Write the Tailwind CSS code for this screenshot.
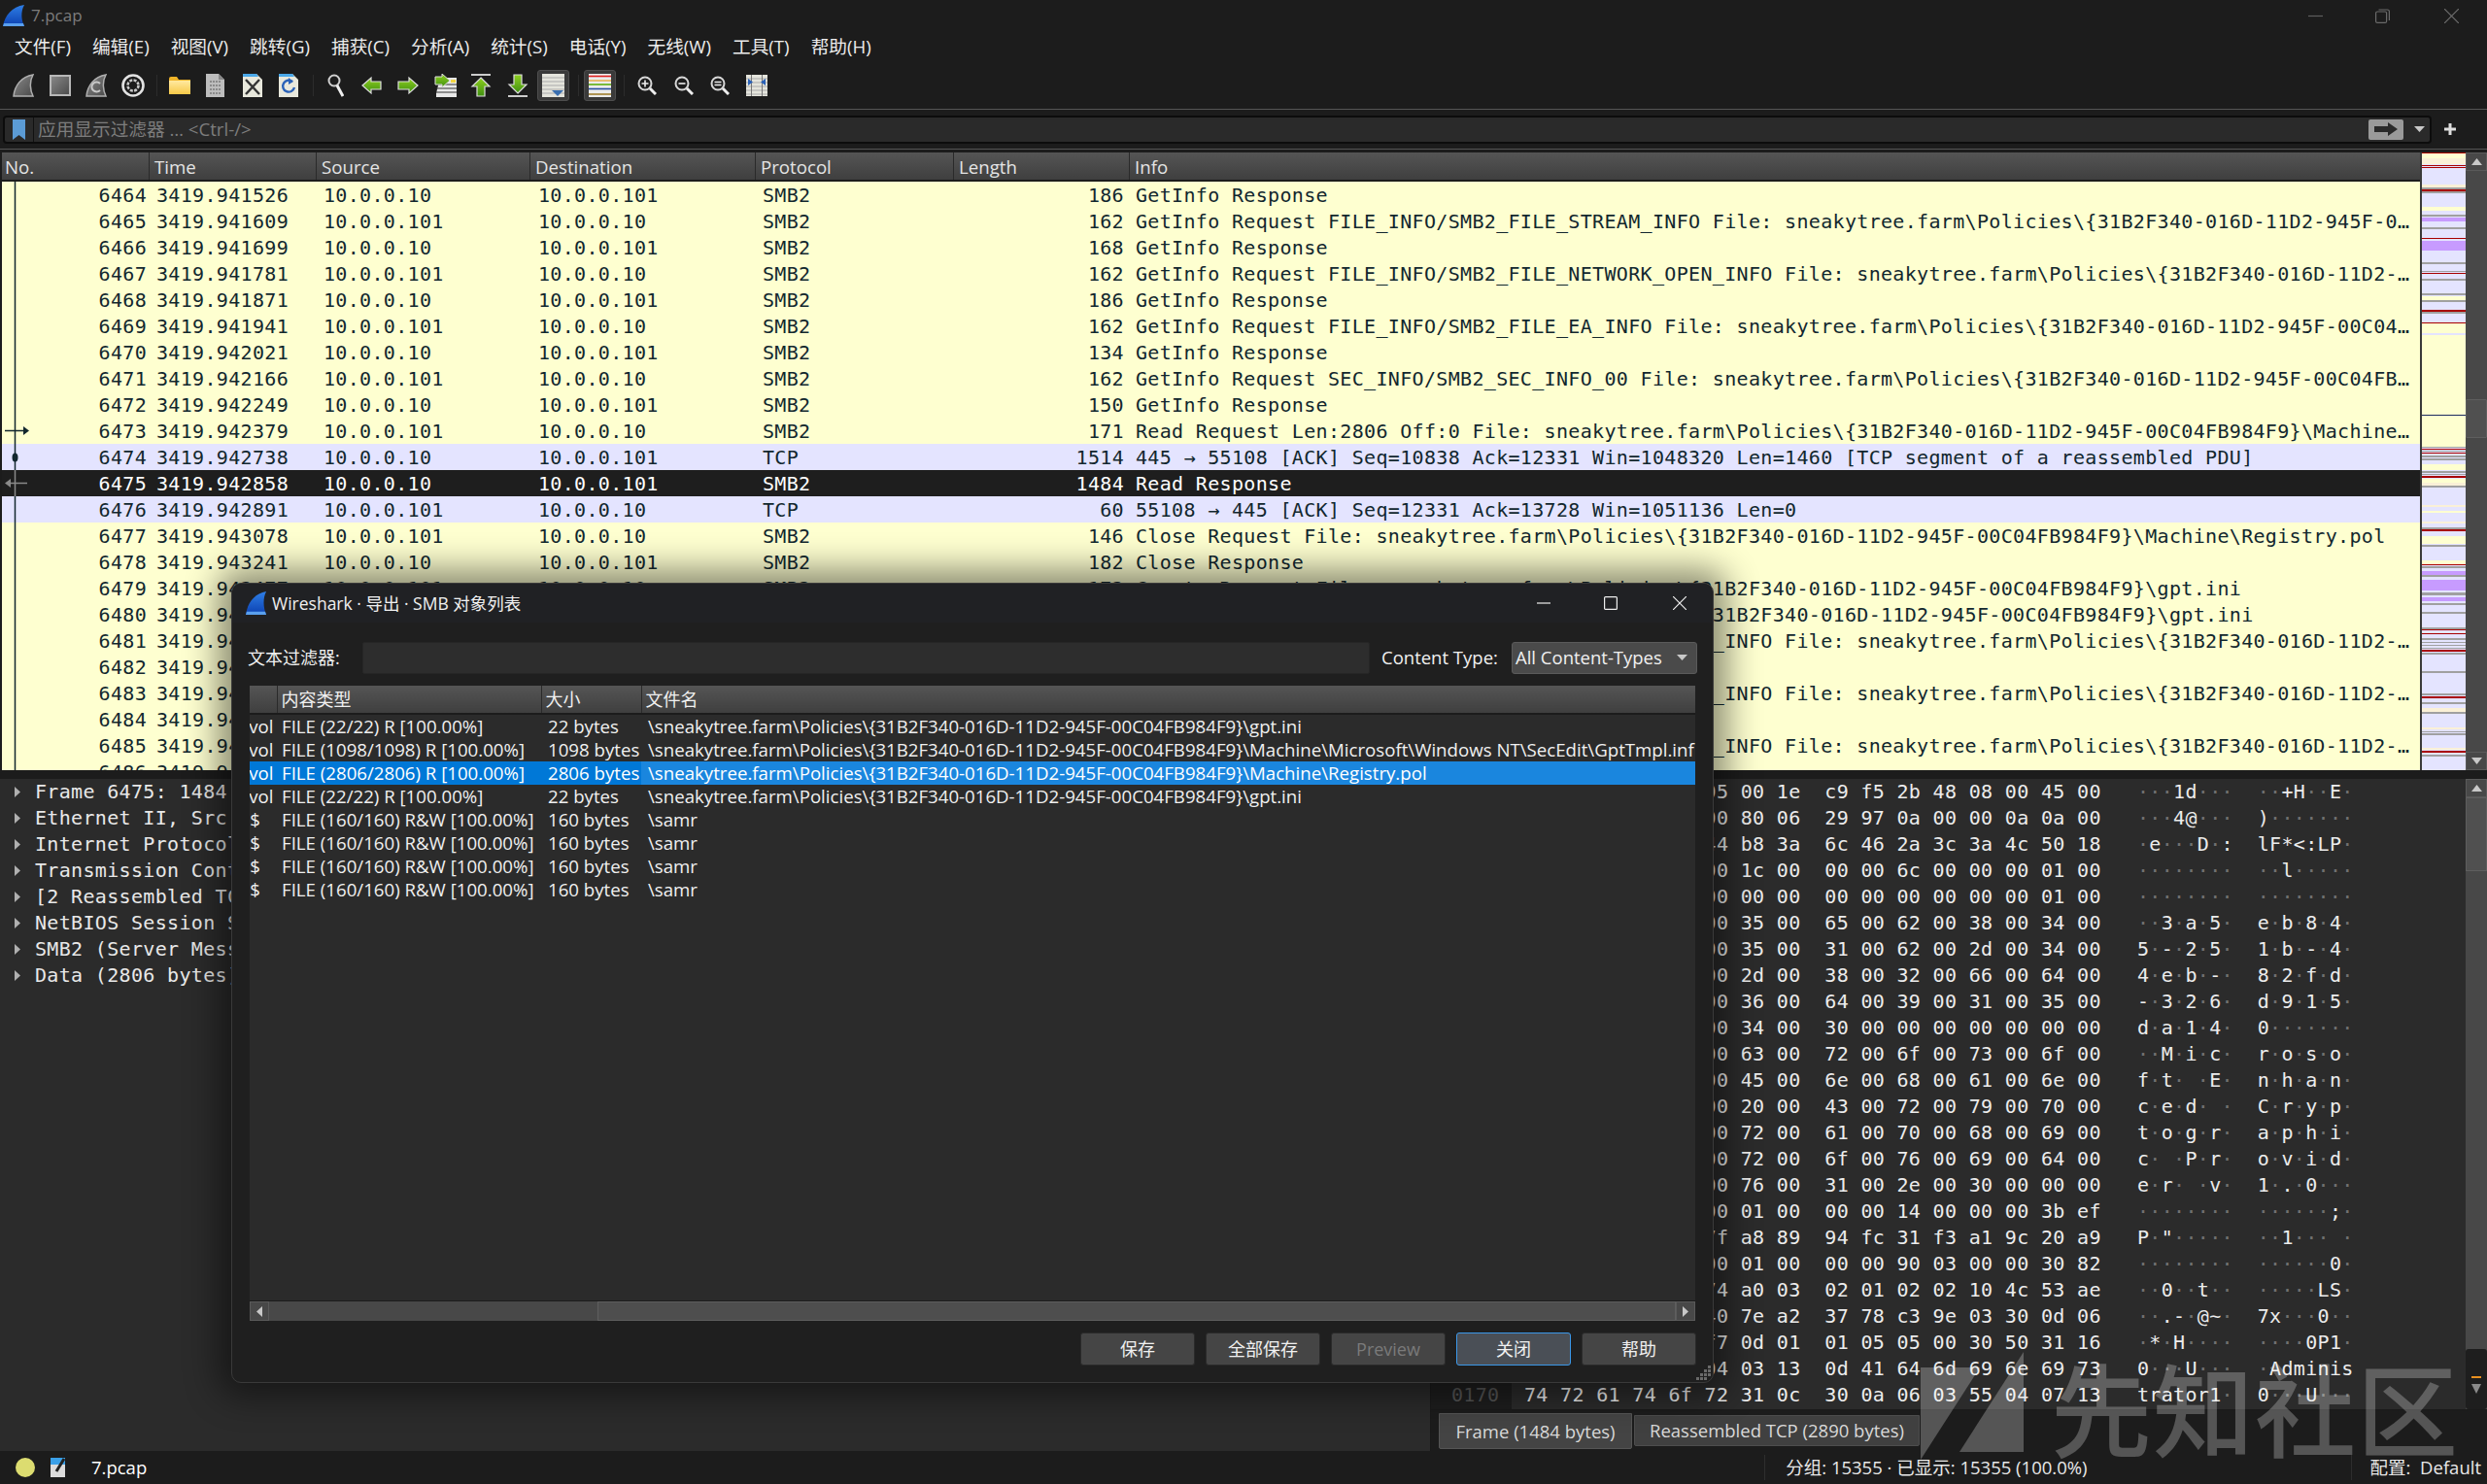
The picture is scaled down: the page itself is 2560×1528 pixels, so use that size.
<!DOCTYPE html>
<html lang="zh">
<head>
<meta charset="utf-8">
<title>7.pcap</title>
<script src="https://cdn.jsdelivr.net/npm/@tailwindcss/browser@4"></script>
</head>
<body class="bg-[#1c1c1c]">
<svg width="0" height="0" class="absolute">
  <defs>
    <linearGradient id="blue" x1="0" y1="0" x2="0" y2="1"><stop offset="0" stop-color="#2f7fe6"/><stop offset="1" stop-color="#0b3fb0"/></linearGradient>
    <linearGradient id="gray" x1="0" y1="0" x2="1" y2="1"><stop offset="0" stop-color="#8a8a8a"/><stop offset="1" stop-color="#4a4a4a"/></linearGradient>
    <linearGradient id="green" x1="0" y1="0" x2="0" y2="1"><stop offset="0" stop-color="#8fd020"/><stop offset="1" stop-color="#3f8f10"/></linearGradient>
    <linearGradient id="folder" x1="0" y1="0" x2="0" y2="1"><stop offset="0" stop-color="#ffe9a0"/><stop offset="1" stop-color="#f7c948"/></linearGradient>
  </defs>
</svg>
<div class="relative w-[2560px] h-[1528px] overflow-hidden flex flex-col bg-[#1c1c1c] text-[#e6e6e6] text-[18px] [font-family:'Open_Sans','Noto_Sans_CJK_SC',sans-serif]">

  <!-- title bar -->
  <div class="h-[32px] flex items-center relative">
    <svg class="ml-[2px] w-[24px] h-[24px]" viewBox="0 0 24 24"><path d="M1 23 C3 12 10 3 23 1 C19 8 20 17 23 23 Z" fill="url(#blue)"/><path d="M1 23 L23 23 L22 20 L2 20 Z" fill="#5aa0ee"/></svg>
    <span class="ml-[6px] text-[#7c7c7c] text-[17px]">7.pcap</span>
    <div class="ml-auto flex items-center">
      <svg class="w-[15px] h-[15px]" viewBox="0 0 15 15"><path d="M0 7.5H15" stroke="#5e5e5e" stroke-width="1.2"/></svg>
      <svg class="ml-[54px] w-[15px] h-[15px]" viewBox="0 0 15 15" fill="none" stroke="#6a6a6a" stroke-width="1.2"><rect x="0.6" y="3" width="11" height="11.4" rx="1.5"/><path d="M3.5 1H12.5Q14.4 1 14.4 3V12"/></svg>
      <svg class="ml-[56px] mr-[29px] w-[15px] h-[15px]" viewBox="0 0 15 15"><path d="M0 0L15 15M15 0L0 15" stroke="#6e6e6e" stroke-width="1.2"/></svg>
    </div>
  </div>

  <!-- menu -->
  <div class="h-[32px] flex items-center pl-[15px] gap-[22px] text-[18.67px] text-[#ececec]">
    <span>文件(F)</span><span>编辑(E)</span><span>视图(V)</span><span>跳转(G)</span><span>捕获(C)</span><span>分析(A)</span><span>统计(S)</span><span>电话(Y)</span><span>无线(W)</span><span>工具(T)</span><span>帮助(H)</span>
  </div>

  <!-- toolbar -->
  <div class="h-[48px] flex items-center pl-[13px] border-b border-b-[#555] box-content">
    <svg class="w-[22px] h-[24px]" viewBox="0 0 22 24"><path d="M1 23 C2 12 9 3 21 1 C17 8 18 17 21 23 Z" fill="url(#gray)" stroke="#b0b0b0" stroke-width="1.5"/></svg>
    <svg class="ml-[16px] w-[22px] h-[22px]" viewBox="0 0 22 22"><rect x="1" y="1" width="20" height="20" fill="url(#gray)" stroke="#b8b8b8" stroke-width="2"/></svg>
    <svg class="ml-[15px] w-[22px] h-[24px]" viewBox="0 0 22 24"><path d="M1 23 C2 12 9 3 21 1 C17 8 18 17 21 23 Z" fill="url(#gray)" stroke="#b0b0b0" stroke-width="1.5"/><path d="M15 10a5 5 0 1 0 0 7" fill="none" stroke="#c8c8c8" stroke-width="2"/></svg>
    <svg class="ml-[15px] w-[24px] h-[24px]" viewBox="0 0 24 24" fill="none"><circle cx="12" cy="12" r="10.5" stroke="#e2e2e2" stroke-width="2.6"/><circle cx="12" cy="12" r="5.5" stroke="#c8c8c8" stroke-width="2.6" stroke-dasharray="3 1.3"/></svg>
    <div class="ml-[12px] w-[1px] h-[22px] bg-[#2c2c2c]"></div>
    <svg class="ml-[12px] w-[22px] h-[18px]" viewBox="0 0 22 18"><path d="M0 2Q0 0 2 0H8L10 3H22V17H0Z" fill="#f0b429"/><rect x="0" y="4" width="22" height="14" fill="url(#folder)"/></svg>
    <svg class="ml-[16px] w-[19px] h-[24px]" viewBox="0 0 19 24"><path d="M0 0H13L19 6V24H0Z" fill="#bdbdbd"/><path d="M13 0L19 6H13Z" fill="#888"/><path d="M4 8H15M4 12H15M4 16H15M4 20H15" stroke="#8a8a8a" stroke-width="2" stroke-dasharray="2 1"/></svg>
    <svg class="ml-[19px] w-[20px] h-[24px]" viewBox="0 0 20 24"><path d="M0 0H14L20 6V24H0Z" fill="#e8e8dc"/><path d="M0 0H14L16 3H0Z" fill="#4aa8e8"/><path d="M3 6L17 21M17 6L3 21" stroke="#333" stroke-width="2.4"/></svg>
    <svg class="ml-[17px] w-[20px] h-[24px]" viewBox="0 0 20 24"><path d="M0 0H14L20 6V24H0Z" fill="#e8e8dc"/><path d="M0 0H14L16 3H0Z" fill="#4aa8e8"/><path d="M14 8a6 6 0 1 0 2 6" fill="none" stroke="#2a62b8" stroke-width="2.4"/><path d="M10 4L15 8L10 11Z" fill="#2a62b8"/></svg>
    <div class="ml-[15px] w-[1px] h-[22px] bg-[#2c2c2c]"></div>
    <svg class="ml-[14px] w-[17px] h-[24px]" viewBox="0 0 17 24" fill="none"><circle cx="7" cy="7" r="5.5" stroke="#d0d0d0" stroke-width="2"/><path d="M10 12L16 23" stroke="#eee" stroke-width="3"/></svg>
    <svg class="ml-[18px] w-[21px] h-[20px]" viewBox="0 0 21 20"><path d="M1 10L10 2V6H20V14H10V18Z" fill="url(#green)" stroke="#ddd" stroke-width="1.2"/></svg>
    <svg class="ml-[16px] w-[22px] h-[20px]" viewBox="0 0 22 20"><path d="M21 10L12 2V6H1V14H12V18Z" fill="url(#green)" stroke="#ddd" stroke-width="1.2"/></svg>
    <svg class="ml-[16px] w-[23px] h-[24px]" viewBox="0 0 23 24"><path d="M6 4H23V24H2V20" fill="#e8e8e8"/><path d="M2 11H23M2 15H23M2 19H23" stroke="#333" stroke-width="1.2"/><rect x="17" y="6" width="5" height="3" fill="#f2d544"/><path d="M16 7L8 0V3H1V11H8V14Z" fill="url(#green)" stroke="#ddd"/></svg>
    <svg class="ml-[14px] w-[22px] h-[24px]" viewBox="0 0 22 24"><path d="M1 1H21" stroke="#ccc" stroke-width="2"/><path d="M11 4L20 13H15V23H7V13H2Z" fill="url(#green)" stroke="#ddd" stroke-width="1.2"/></svg>
    <svg class="ml-[16px] w-[22px] h-[24px]" viewBox="0 0 22 24"><path d="M1 23H21" stroke="#ccc" stroke-width="2"/><path d="M11 20L20 11H15V1H7V11H2Z" fill="url(#green)" stroke="#ddd" stroke-width="1.2"/></svg>
    <div class="ml-[9px] w-[33px] h-[32px] rounded-[3px] bg-[#3a3a3a] border border-[#4e4e4e] flex items-center justify-center">
      <svg class="w-[23px] h-[24px]" viewBox="0 0 23 24"><rect width="23" height="24" fill="#e4e4dc"/><path d="M0 4H23M0 8H23M0 12H23M0 16H23M0 20H23" stroke="#aaa" stroke-width="1"/><path d="M10 17H22L16 23Z" fill="#3a6fb0"/></svg>
    </div>
    <div class="ml-[9px] w-[1px] h-[22px] bg-[#2c2c2c]"></div>
    <div class="ml-[5px] w-[33px] h-[32px] rounded-[3px] bg-[#3a3a3a] border border-[#4e4e4e] flex items-center justify-center">
      <svg class="w-[23px] h-[24px]" viewBox="0 0 23 24"><rect width="23" height="24" fill="#ececec"/><path d="M0 2.5H23" stroke="#e02020" stroke-width="1.6"/><path d="M0 7H23" stroke="#e8a020" stroke-width="1.2"/><path d="M0 11H23" stroke="#60b010" stroke-width="1.6"/><path d="M0 15.5H23" stroke="#2850a0" stroke-width="1.6"/><path d="M0 21H23" stroke="#a08030" stroke-width="1.6"/></svg>
    </div>
    <div class="ml-[8px] w-[1px] h-[22px] bg-[#2c2c2c]"></div>
    <svg class="ml-[13px] w-[20px] h-[20px]" viewBox="0 0 20 20" fill="none"><circle cx="8" cy="8" r="6.5" stroke="#d8d8d8" stroke-width="2"/><path d="M13 13L19 19" stroke="#eee" stroke-width="3"/><path d="M4.5 8H11.5M8 4.5V11.5" stroke="#eee" stroke-width="1.6"/></svg>
    <svg class="ml-[18px] w-[20px] h-[20px]" viewBox="0 0 20 20" fill="none"><circle cx="8" cy="8" r="6.5" stroke="#d8d8d8" stroke-width="2"/><path d="M13 13L19 19" stroke="#eee" stroke-width="3"/><path d="M4.5 8H11.5" stroke="#eee" stroke-width="1.6"/></svg>
    <svg class="ml-[17px] w-[20px] h-[20px]" viewBox="0 0 20 20" fill="none"><circle cx="8" cy="8" r="6.5" stroke="#d8d8d8" stroke-width="2"/><path d="M13 13L19 19" stroke="#eee" stroke-width="3"/><path d="M4.5 6.5H11.5M4.5 9.5H11.5" stroke="#eee" stroke-width="1.4"/></svg>
    <svg class="ml-[17px] w-[22px] h-[22px]" viewBox="0 0 22 22"><rect width="22" height="22" fill="#e4e4dc"/><path d="M0 4H22M0 8H22M0 12H22M0 16H22M0 20H22" stroke="#aaa" stroke-width="1"/><path d="M5.500 0V22M16.500 0V22" stroke="#777" stroke-width="1"/><path d="M2 4L7 7.500L2 11ZM20 4L15 7.500L20 11Z" fill="#2a62b8"/></svg>
  </div>

  <!-- display filter -->
  <div class="h-[40px] flex items-center pl-[3px] border-b border-b-[#555] box-content">
    <div class="w-[2500px] h-[29px] rounded-[4px] border-2 border-[#0c0c0c] bg-[#2a2a2a] flex items-center">
      <div class="w-[30px] h-full border-r border-r-[#111] flex items-center justify-center">
        <svg class="w-[13px] h-[21px]" viewBox="0 0 13 21"><path d="M0 0H13V21L6.500 16L0 21Z" fill="#5b9bd5"/></svg>
      </div>
      <span class="ml-[4px] text-[#7d7d7d] text-[18.67px]">应用显示过滤器 … &lt;Ctrl-/&gt;</span>
      <div class="ml-auto w-[36px] h-[21px] rounded-[2px] bg-[#9a9a9a] flex items-center justify-center">
        <svg class="w-[24px] h-[14px]" viewBox="0 0 24 14"><path d="M0 4H14V0L24 7L14 14V10H0Z" fill="#2a2a2a"/></svg>
      </div>
      <svg class="ml-[11px] mr-[5px] w-[11px] h-[6px]" viewBox="0 0 11 6"><path d="M0 0H11L5.500 6Z" fill="#c8c8c8"/></svg>
    </div>
    <svg class="ml-[13px] w-[12px] h-[12px]" viewBox="0 0 12 12"><path d="M6 0V12M0 6H12" stroke="#ddd" stroke-width="3"/></svg>
  </div>

  <!-- packet list -->
  <div class="mt-[3px] h-[636px] flex">
    <div class="relative w-[2493px] border-l-2 border-l-[#1c1c1c] border-r-2 border-r-[#3a3a3a] overflow-hidden flex flex-col">
      <div class="h-[30px] flex shrink-0 text-[18.67px] text-[#e4e4e4] bg-gradient-to-b from-[#555555] to-[#3f3f3f] border-b-2 border-b-[#1c1c1c] [&>div]:h-full [&>div]:pl-[5px] [&>div]:border-r [&>div]:border-r-[#2a2a2a] [&>div]:leading-[29px]">
        <div class="w-[152px] !pl-[3px]">No.</div>
        <div class="w-[172px]">Time</div>
        <div class="w-[220px]">Source</div>
        <div class="w-[232px]">Destination</div>
        <div class="w-[204px]">Protocol</div>
        <div class="w-[181px]">Length</div>
        <div class="flex-1 !border-r-0">Info</div>
      </div>
      <div class="relative flex-1 overflow-hidden bg-[#feffd0]">
        <table class="w-[2491px] table-fixed border-collapse text-[20px] tracking-[0.33px] text-[#12272e] [font-family:'DejaVu_Sans_Mono',monospace] [&_td]:p-0 [&_td]:h-[27px] [&_td]:leading-[26px] [&_td]:align-bottom [&_td]:whitespace-pre [&_td:nth-child(1)]:text-right [&_td:nth-child(2)]:pl-[10px] [&_td:nth-child(6)]:text-right [&_td:nth-child(7)]:pl-[12px]">
          <colgroup><col class="w-[149px]"><col class="w-[182px]"><col class="w-[221px]"><col class="w-[231px]"><col class="w-[215px]"><col class="w-[157px]"><col></colgroup>
          <tbody>
          <tr><td>6464</td><td>3419.941526</td><td>10.0.0.10</td><td>10.0.0.101</td><td>SMB2</td><td>186</td><td>GetInfo Response</td></tr>
          <tr><td>6465</td><td>3419.941609</td><td>10.0.0.101</td><td>10.0.0.10</td><td>SMB2</td><td>162</td><td>GetInfo Request FILE_INFO/SMB2_FILE_STREAM_INFO File: sneakytree.farm\Policies\{31B2F340-016D-11D2-945F-0…</td></tr>
          <tr><td>6466</td><td>3419.941699</td><td>10.0.0.10</td><td>10.0.0.101</td><td>SMB2</td><td>168</td><td>GetInfo Response</td></tr>
          <tr><td>6467</td><td>3419.941781</td><td>10.0.0.101</td><td>10.0.0.10</td><td>SMB2</td><td>162</td><td>GetInfo Request FILE_INFO/SMB2_FILE_NETWORK_OPEN_INFO File: sneakytree.farm\Policies\{31B2F340-016D-11D2-…</td></tr>
          <tr><td>6468</td><td>3419.941871</td><td>10.0.0.10</td><td>10.0.0.101</td><td>SMB2</td><td>186</td><td>GetInfo Response</td></tr>
          <tr><td>6469</td><td>3419.941941</td><td>10.0.0.101</td><td>10.0.0.10</td><td>SMB2</td><td>162</td><td>GetInfo Request FILE_INFO/SMB2_FILE_EA_INFO File: sneakytree.farm\Policies\{31B2F340-016D-11D2-945F-00C04…</td></tr>
          <tr><td>6470</td><td>3419.942021</td><td>10.0.0.10</td><td>10.0.0.101</td><td>SMB2</td><td>134</td><td>GetInfo Response</td></tr>
          <tr><td>6471</td><td>3419.942166</td><td>10.0.0.101</td><td>10.0.0.10</td><td>SMB2</td><td>162</td><td>GetInfo Request SEC_INFO/SMB2_SEC_INFO_00 File: sneakytree.farm\Policies\{31B2F340-016D-11D2-945F-00C04FB…</td></tr>
          <tr><td>6472</td><td>3419.942249</td><td>10.0.0.10</td><td>10.0.0.101</td><td>SMB2</td><td>150</td><td>GetInfo Response</td></tr>
          <tr><td>6473</td><td>3419.942379</td><td>10.0.0.101</td><td>10.0.0.10</td><td>SMB2</td><td>171</td><td>Read Request Len:2806 Off:0 File: sneakytree.farm\Policies\{31B2F340-016D-11D2-945F-00C04FB984F9}\Machine…</td></tr>
          <tr class="bg-[#e4e4ff]"><td>6474</td><td>3419.942738</td><td>10.0.0.10</td><td>10.0.0.101</td><td>TCP</td><td>1514</td><td>445 → 55108 [ACK] Seq=10838 Ack=12331 Win=1048320 Len=1460 [TCP segment of a reassembled PDU]</td></tr>
          <tr class="bg-[#1e1e1e] text-white"><td>6475</td><td>3419.942858</td><td>10.0.0.10</td><td>10.0.0.101</td><td>SMB2</td><td>1484</td><td>Read Response</td></tr>
          <tr class="bg-[#e4e4ff]"><td>6476</td><td>3419.942891</td><td>10.0.0.101</td><td>10.0.0.10</td><td>TCP</td><td>60</td><td>55108 → 445 [ACK] Seq=12331 Ack=13728 Win=1051136 Len=0</td></tr>
          <tr><td>6477</td><td>3419.943078</td><td>10.0.0.101</td><td>10.0.0.10</td><td>SMB2</td><td>146</td><td>Close Request File: sneakytree.farm\Policies\{31B2F340-016D-11D2-945F-00C04FB984F9}\Machine\Registry.pol</td></tr>
          <tr><td>6478</td><td>3419.943241</td><td>10.0.0.10</td><td>10.0.0.101</td><td>SMB2</td><td>182</td><td>Close Response</td></tr>
          <tr><td>6479</td><td>3419.943477</td><td>10.0.0.101</td><td>10.0.0.10</td><td>SMB2</td><td>172</td><td>Create Request File: sneakytree.farm\Policies\{31B2F340-016D-11D2-945F-00C04FB984F9}\gpt.ini</td></tr>
          <tr><td>6480</td><td>3419.943912</td><td>10.0.0.10</td><td>10.0.0.101</td><td>SMB2</td><td>210</td><td>Create Response File: sneakytree.farm\Policies\{31B2F340-016D-11D2-945F-00C04FB984F9}\gpt.ini</td></tr>
          <tr><td>6481</td><td>3419.944018</td><td>10.0.0.101</td><td>10.0.0.10</td><td>SMB2</td><td>162</td><td>GetInfo Request FILE_INFO/SMB2_FILE_NETWORK_OPEN_INFO File: sneakytree.farm\Policies\{31B2F340-016D-11D2-…</td></tr>
          <tr><td>6482</td><td>3419.944102</td><td>10.0.0.10</td><td>10.0.0.101</td><td>SMB2</td><td>186</td><td>GetInfo Response</td></tr>
          <tr><td>6483</td><td>3419.944198</td><td>10.0.0.101</td><td>10.0.0.10</td><td>SMB2</td><td>162</td><td>GetInfo Request FILE_INFO/SMB2_FILE_NETWORK_OPEN_INFO File: sneakytree.farm\Policies\{31B2F340-016D-11D2-…</td></tr>
          <tr><td>6484</td><td>3419.944276</td><td>10.0.0.10</td><td>10.0.0.101</td><td>SMB2</td><td>186</td><td>GetInfo Response</td></tr>
          <tr><td>6485</td><td>3419.944361</td><td>10.0.0.101</td><td>10.0.0.10</td><td>SMB2</td><td>162</td><td>GetInfo Request FILE_INFO/SMB2_FILE_NETWORK_OPEN_INFO File: sneakytree.farm\Policies\{31B2F340-016D-11D2-…</td></tr>
          <tr><td>6486</td><td>3419.944448</td><td>10.0.0.10</td><td>10.0.0.101</td><td>SMB2</td><td>186</td><td>GetInfo Response</td></tr>
          </tbody>
        </table>
        <!-- related packet markers -->
        <svg class="absolute left-0 top-0 w-[30px] h-[606px]" viewBox="0 0 30 606" fill="none">
          <path d="M13.500 0V297" stroke="#12272e" stroke-width="1.5"/>
          <path d="M13.500 297V324" stroke="#8a8a8a" stroke-width="1.5"/>
          <path d="M13.500 324V606" stroke="#12272e" stroke-width="1.5"/>
          <path d="M3 256.500H25" stroke="#12272e" stroke-width="1.500"/><path d="M22 252L28 256.500L22 261Z" fill="#12272e"/>
          <ellipse cx="13.500" cy="284" rx="3" ry="4.500" fill="#12272e"/>
          <path d="M6 310.500H26" stroke="#8a8a8a" stroke-width="1.500"/><path d="M9 306L3 310.500L9 315Z" fill="#8a8a8a"/>
        </svg>
      </div>
    </div>
    <!-- minimap -->
    <svg class="w-[45px] h-[636px] shrink-0" viewBox="0 157 45 636" preserveAspectRatio="none">
      <rect x="0" y="157" width="45" height="636" fill="#e4e4ff"/>
      <g fill="#feffd0"><rect y="158" width="45" height="5"/><rect y="213" width="45" height="4"/><rect y="305" width="45" height="4"/><rect y="333" width="45" height="10"/><rect y="345" width="45" height="115"/><rect y="478" width="45" height="6"/><rect y="493" width="45" height="4"/><rect y="526" width="45" height="2"/><rect y="552" width="45" height="8"/><rect y="577" width="45" height="4"/></g>
      <g fill="#faf0d7"><rect y="163" width="45" height="6"/><rect y="190" width="45" height="3"/><rect y="497" width="45" height="3"/><rect y="520" width="45" height="2"/><rect y="537" width="45" height="2"/><rect y="729" width="45" height="4"/><rect y="749" width="45" height="2"/><rect y="770" width="45" height="2"/></g>
      <g fill="#c79bff"><rect y="224" width="45" height="4"/><rect y="248" width="45" height="10"/><rect y="588" width="45" height="4"/><rect y="597" width="45" height="11"/><rect y="615" width="45" height="4"/></g>
      <g fill="#a0a0a0"><rect y="193" width="45" height="2"/><rect y="197" width="45" height="2"/><rect y="221" width="45" height="2"/><rect y="234" width="45" height="2"/><rect y="270" width="45" height="2"/><rect y="279" width="45" height="1"/><rect y="287" width="45" height="2"/><rect y="302" width="45" height="2"/><rect y="309" width="45" height="2"/><rect y="321" width="45" height="2"/><rect y="460" width="45" height="1"/><rect y="464" width="45" height="1"/><rect y="469" width="45" height="2"/><rect y="472" width="45" height="2"/><rect y="485" width="45" height="2"/><rect y="488" width="45" height="1"/><rect y="500" width="45" height="2"/><rect y="543" width="45" height="2"/><rect y="561" width="45" height="2"/><rect y="583" width="45" height="2"/><rect y="592" width="45" height="2"/><rect y="610" width="45" height="3"/><rect y="621" width="45" height="2"/><rect y="630" width="45" height="2"/><rect y="646" width="45" height="2"/><rect y="657" width="45" height="2"/><rect y="661" width="45" height="1"/><rect y="664" width="45" height="1"/><rect y="667" width="45" height="1"/><rect y="672" width="45" height="2"/><rect y="691" width="45" height="2"/><rect y="714" width="45" height="2"/><rect y="723" width="45" height="2"/><rect y="733" width="45" height="2"/><rect y="753" width="45" height="1"/><rect y="755" width="45" height="2"/><rect y="777" width="45" height="2"/></g>
      <g fill="#a80000"><rect y="157" width="45" height="1"/><rect y="170" width="45" height="1"/><rect y="172" width="45" height="1"/><rect y="195" width="45" height="2"/><rect y="245" width="45" height="1"/><rect y="281" width="45" height="1"/><rect y="319" width="45" height="2"/><rect y="332" width="45" height="1"/><rect y="462" width="45" height="1"/><rect y="466" width="45" height="1"/><rect y="490" width="45" height="2"/><rect y="545" width="45" height="2"/><rect y="581" width="45" height="1"/><rect y="648" width="45" height="1"/><rect y="652" width="45" height="1"/><rect y="669" width="45" height="2"/><rect y="717" width="45" height="2"/><rect y="773" width="45" height="2"/></g>
      <rect y="427" width="45" height="1" fill="#1c2a60"/>
    </svg>
    <!-- scrollbar -->
    <div class="w-[22px] shrink-0 flex flex-col bg-[#484848]">
      <div class="h-[19px] bg-[#484848] border border-[#5a5a5a] flex items-center justify-center"><svg class="w-[11px] h-[7px]" viewBox="0 0 11 7"><path d="M0 7H11L5.500 0Z" fill="#c8c8c8"/></svg></div>
      <div class="h-[235px]"></div>
      <div class="h-[40px] bg-[#505050] border border-[#5e5e5e] rounded-[1px]"></div>
      <div class="flex-1"></div>
      <div class="h-[19px] bg-[#484848] border border-[#5a5a5a] flex items-center justify-center"><svg class="w-[11px] h-[7px]" viewBox="0 0 11 7"><path d="M0 0H11L5.500 7Z" fill="#c8c8c8"/></svg></div>
    </div>
  </div>

  <!-- bottom panes -->
  <div class="mt-[9px] flex-1 flex min-h-0">
    <div class="w-[1473px] shrink-0 bg-[#2b2b2b] text-[20px] tracking-[0.33px] text-[#e8e8e8] leading-[27px] border-r border-r-[#1a1a1a] [font-family:'DejaVu_Sans_Mono',monospace] [&>div]:flex [&>div]:items-center [&>div]:whitespace-pre [&>div]:h-[27px] [&_svg]:ml-[15px] [&_svg]:mr-[15px] [&_svg]:w-[6px] [&_svg]:h-[11px]">
      <div><svg viewBox="0 0 6 11"><path d="M0 0L6 5.500L0 11Z" fill="#b0b0b0"/></svg>Frame 6475: 1484 bytes on wire (11872 bits), 1484 bytes captured (11872 bits)</div>
      <div><svg viewBox="0 0 6 11"><path d="M0 0L6 5.500L0 11Z" fill="#b0b0b0"/></svg>Ethernet II, Src: VMware_1d:64:05, Dst: VMware_c9:f5:2b</div>
      <div><svg viewBox="0 0 6 11"><path d="M0 0L6 5.500L0 11Z" fill="#b0b0b0"/></svg>Internet Protocol Version 4, Src: 10.0.0.10, Dst: 10.0.0.101</div>
      <div><svg viewBox="0 0 6 11"><path d="M0 0L6 5.500L0 11Z" fill="#b0b0b0"/></svg>Transmission Control Protocol, Src Port: 445, Dst Port: 55108</div>
      <div><svg viewBox="0 0 6 11"><path d="M0 0L6 5.500L0 11Z" fill="#b0b0b0"/></svg>[2 Reassembled TCP Segments (2890 bytes): #6474(1460), #6475(1430)]</div>
      <div><svg viewBox="0 0 6 11"><path d="M0 0L6 5.500L0 11Z" fill="#b0b0b0"/></svg>NetBIOS Session Service</div>
      <div><svg viewBox="0 0 6 11"><path d="M0 0L6 5.500L0 11Z" fill="#b0b0b0"/></svg>SMB2 (Server Message Block Protocol version 2)</div>
      <div><svg viewBox="0 0 6 11"><path d="M0 0L6 5.500L0 11Z" fill="#b0b0b0"/></svg>Data (2806 bytes)</div>
    </div>
    <div class="flex-1 flex flex-col min-w-0">
      <div class="h-[650px] flex bg-[#2b2b2b] border-b border-b-[#1a1a1a]">
        <div class="w-[83px] shrink-0 bg-[#1e1e1e] pl-[21px] text-[20px] tracking-[0.33px] leading-[27px] text-[#565656] whitespace-pre [font-family:'DejaVu_Sans_Mono',monospace]">0000
0010
0020
0030
0040
0050
0060
0070
0080
0090
00a0
00b0
00c0
00d0
00e0
00f0
0100
0110
0120
0130
0140
0150
0160
0170</div>
        <div class="flex-1 pl-[13px] text-[20px] tracking-[0.33px] leading-[27px] text-[#ececec] whitespace-pre [font-family:'DejaVu_Sans_Mono',monospace] [&_i]:not-italic [&_i]:text-[#707070]">00 0c 29 1d 64 05 00 1e  c9 f5 2b 48 08 00 45 00   <i>···</i>1d<i>···</i>  <i>··</i>+H<i>··</i>E<i>·</i>
05 ce 31 34 40 00 80 06  29 97 0a 00 00 0a 0a 00   <i>···</i>4@<i>···</i>  )<i>·······</i>
00 65 01 bd d7 44 b8 3a  6c 46 2a 3c 3a 4c 50 18   <i>·</i>e<i>···</i>D<i>·</i>:  lF*&lt;:LP<i>·</i>
10 00 31 00 00 00 1c 00  00 00 6c 00 00 00 01 00   <i>········</i>  <i>··</i>l<i>·····</i>
00 00 00 00 00 00 00 00  00 00 00 00 00 00 01 00   <i>········</i>  <i>········</i>
00 00 33 00 61 00 35 00  65 00 62 00 38 00 34 00   <i>··</i>3<i>·</i>a<i>·</i>5<i>·</i>  e<i>·</i>b<i>·</i>8<i>·</i>4<i>·</i>
35 00 2d 00 32 00 35 00  31 00 62 00 2d 00 34 00   5<i>·</i>-<i>·</i>2<i>·</i>5<i>·</i>  1<i>·</i>b<i>·</i>-<i>·</i>4<i>·</i>
34 00 65 00 62 00 2d 00  38 00 32 00 66 00 64 00   4<i>·</i>e<i>·</i>b<i>·</i>-<i>·</i>  8<i>·</i>2<i>·</i>f<i>·</i>d<i>·</i>
2d 00 33 00 32 00 36 00  64 00 39 00 31 00 35 00   -<i>·</i>3<i>·</i>2<i>·</i>6<i>·</i>  d<i>·</i>9<i>·</i>1<i>·</i>5<i>·</i>
64 00 61 00 31 00 34 00  30 00 00 00 00 00 00 00   d<i>·</i>a<i>·</i>1<i>·</i>4<i>·</i>  0<i>·······</i>
00 00 4d 00 69 00 63 00  72 00 6f 00 73 00 6f 00   <i>··</i>M<i>·</i>i<i>·</i>c<i>·</i>  r<i>·</i>o<i>·</i>s<i>·</i>o<i>·</i>
66 00 74 00 20 00 45 00  6e 00 68 00 61 00 6e 00   f<i>·</i>t<i>·</i> <i>·</i>E<i>·</i>  n<i>·</i>h<i>·</i>a<i>·</i>n<i>·</i>
63 00 65 00 64 00 20 00  43 00 72 00 79 00 70 00   c<i>·</i>e<i>·</i>d<i>·</i> <i>·</i>  C<i>·</i>r<i>·</i>y<i>·</i>p<i>·</i>
74 00 6f 00 67 00 72 00  61 00 70 00 68 00 69 00   t<i>·</i>o<i>·</i>g<i>·</i>r<i>·</i>  a<i>·</i>p<i>·</i>h<i>·</i>i<i>·</i>
63 00 20 00 50 00 72 00  6f 00 76 00 69 00 64 00   c<i>·</i> <i>·</i>P<i>·</i>r<i>·</i>  o<i>·</i>v<i>·</i>i<i>·</i>d<i>·</i>
65 00 72 00 20 00 76 00  31 00 2e 00 30 00 00 00   e<i>·</i>r<i>·</i> <i>·</i>v<i>·</i>  1<i>·</i>.<i>·</i>0<i>···</i>
00 00 00 00 00 00 01 00  00 00 14 00 00 00 3b ef   <i>········</i>  <i>······</i>;<i>·</i>
50 0c 22 a1 b3 7f a8 89  94 fc 31 f3 a1 9c 20 a9   P<i>·</i>"<i>·····</i>  <i>··</i>1<i>···</i> <i>·</i>
0a 00 00 00 00 00 01 00  00 00 90 03 00 00 30 82   <i>········</i>  <i>······</i>0<i>·</i>
03 8c 30 82 02 74 a0 03  02 01 02 02 10 4c 53 ae   <i>··</i>0<i>··</i>t<i>··</i>  <i>·····</i>LS<i>·</i>
08 0a 2e 2d 84 40 7e a2  37 78 c3 9e 03 30 0d 06   <i>··</i>.-<i>·</i>@~<i>·</i>  7x<i>···</i>0<i>··</i>
09 2a 86 48 86 f7 0d 01  01 05 05 00 30 50 31 16   <i>·</i>*<i>·</i>H<i>····</i>  <i>····</i>0P1<i>·</i>
30 14 06 03 55 04 03 13  0d 41 64 6d 69 6e 69 73   0<i>···</i>U<i>···</i>  <i>·</i>Adminis
74 72 61 74 6f 72 31 0c  30 0a 06 03 55 04 07 13   trator1<i>·</i>  0<i>···</i>U<i>···</i></div>
        <div class="w-[22px] shrink-0 bg-[#484848] flex flex-col">
          <div class="h-[19px] border border-[#5a5a5a] flex items-center justify-center"><svg class="w-[11px] h-[7px]" viewBox="0 0 11 7"><path d="M0 7H11L5.500 0Z" fill="#c8c8c8"/></svg></div>
          <div class="h-[76px] bg-[#505050] border border-[#5e5e5e]"></div>
          <div class="flex-1"></div>
          <div class="h-[62px] bg-[#1e1e1e] rounded-[3px] flex flex-col items-center pt-[28px]">
            <div class="w-[10px] h-[2px] bg-[#e89020]"></div>
            <svg class="mt-[6px] w-[10px] h-[10px]" viewBox="0 0 10 10"><path d="M0 0H10L5 10Z" fill="#8a8a8a"/></svg>
          </div>
        </div>
      </div>
      <div class="flex-1 flex items-start pl-[8px] pt-[3px] text-[18.5px] text-[#d8d8d8]">
        <div class="w-[199px] h-[37px] bg-[#444] border border-[#555] rounded-b-[2px] flex items-center justify-center">Frame (1484 bytes)</div>
        <div class="ml-[2px] w-[294px] h-[32px] mt-[2px] bg-[#404040] border border-[#4d4d4d] rounded-b-[2px] flex items-center justify-center">Reassembled TCP (2890 bytes)</div>
      </div>
    </div>
  </div>

  <!-- status bar -->
  <div class="h-[34px] shrink-0 flex items-center bg-[#1c1c1c] text-[18.5px] text-[#e8e8e8]">
    <div class="ml-[16px] w-[20px] h-[20px] rounded-full bg-[#dcdc70]"></div>
    <svg class="ml-[14px] w-[20px] h-[22px]" viewBox="0 0 20 22"><rect x="2" y="1" width="15" height="20" fill="#dcdcdc"/><rect x="2" y="1" width="15" height="7" fill="#3aa0e8"/><path d="M16 2L8 15" stroke="#222" stroke-width="3"/></svg>
    <span class="ml-[24px] text-white">7.pcap</span>
    <div class="ml-[1665px] w-[1px] h-[26px] bg-[#2e2e2e]"></div>
    <span class="ml-[21px]">分组: 15355 · 已显示: 15355 (100.0%)</span>
    <div class="ml-auto w-[1px] h-[26px] bg-[#2e2e2e]"></div>
    <span class="ml-[19px] mr-[6px] whitespace-pre">配置:  Default</span>
  </div>

  <!-- export dialog -->
  <div class="absolute left-[238px] top-[600px] w-[1526px] h-[824px] rounded-[10px] bg-[#1f1f1f] border border-[#3a3a3a] shadow-[0_0_34px_14px_rgba(0,0,0,0.45)] flex flex-col text-[18px] text-[#f0f0f0]">
    <div class="h-[40px] shrink-0 flex items-center rounded-t-[10px] bg-[#202124]">
      <svg class="ml-[13px] w-[23px] h-[26px]" viewBox="0 0 24 24" preserveAspectRatio="none"><path d="M1 23 C3 12 10 3 23 1 C19 8 20 17 23 23 Z" fill="url(#blue)"/><path d="M1 23 L23 23 L22 20 L2 20 Z" fill="#5aa0ee"/></svg>
      <span class="ml-[5px] text-[17.5px]">Wireshark · 导出 · SMB 对象列表</span>
      <div class="ml-auto flex items-center">
        <svg class="w-[14px] h-[14px]" viewBox="0 0 14 14"><path d="M0 7H14" stroke="#eee" stroke-width="1.2"/></svg>
        <svg class="ml-[55px] w-[14px] h-[14px]" viewBox="0 0 14 14" fill="none"><rect x="0.6" y="0.6" width="12.8" height="12.8" rx="1" stroke="#eee" stroke-width="1.2"/></svg>
        <svg class="ml-[57px] mr-[27px] w-[14px] h-[14px]" viewBox="0 0 14 14"><path d="M0 0L14 14M14 0L0 14" stroke="#eee" stroke-width="1.2"/></svg>
      </div>
    </div>
    <div class="mt-[19px] mx-[16px] h-[34px] shrink-0 flex items-center">
      <span class="w-[118px]">文本过滤器:</span>
      <div class="w-[1037px] h-[33px] rounded-[2px] bg-[#2d2d2d] border border-[#262626]"></div>
      <span class="ml-[12px] w-[134px] text-[18.5px]">Content Type:</span>
      <div class="w-[191px] h-[33px] rounded-[3px] bg-[#4a4a4a] border border-[#5a5a5a] flex items-center pl-[3px]">
        <span class="text-[18.5px]">All Content-Types</span>
        <svg class="ml-auto mr-[9px] w-[11px] h-[6px]" viewBox="0 0 11 6"><path d="M0 0H11L5.500 6Z" fill="#c8c8c8"/></svg>
      </div>
    </div>
    <div class="mt-[12px] mx-[18px] h-[654px] shrink-0 flex flex-col bg-[#2b2b2b]">
      <div class="flex-1 overflow-hidden">
        <table class="w-[1490px] table-fixed border-collapse [&_td]:p-0 [&_td]:h-[24px] [&_td]:leading-[24px] [&_td]:text-[18.67px] [&_td]:whitespace-nowrap [&_td]:overflow-hidden [&_td:nth-child(2)]:pl-[5px] [&_td:nth-child(3)]:pl-[7px] [&_td:nth-child(4)]:pl-[7px] [&_th]:h-[29px] [&_th]:p-0 [&_th]:pl-[4px] [&_th]:font-normal [&_th]:text-left [&_th]:border-r [&_th]:border-r-[#2a2a2a] [&_th]:border-b-2 [&_th]:border-b-[#1c1c1c] [&_th]:bg-gradient-to-b [&_th]:from-[#555555] [&_th]:to-[#3f3f3f]">
          <colgroup><col class="w-[28px]"><col class="w-[272px]"><col class="w-[103px]"><col></colgroup>
          <thead><tr><th></th><th>内容类型</th><th>大小</th><th>文件名</th></tr></thead>
          <tbody>
            <tr><td><span class="block ml-[-28px]">sysvol</span></td><td>FILE (22/22) R [100.00%]</td><td>22 bytes</td><td>\sneakytree.farm\Policies\{31B2F340-016D-11D2-945F-00C04FB984F9}\gpt.ini</td></tr>
            <tr><td><span class="block ml-[-28px]">sysvol</span></td><td>FILE (1098/1098) R [100.00%]</td><td>1098 bytes</td><td>\sneakytree.farm\Policies\{31B2F340-016D-11D2-945F-00C04FB984F9}\Machine\Microsoft\Windows NT\SecEdit\GptTmpl.inf</td></tr>
            <tr class="bg-[#0078d7] text-white"><td><span class="block ml-[-28px]">sysvol</span></td><td>FILE (2806/2806) R [100.00%]</td><td>2806 bytes</td><td class="bg-[#1a86de]">\sneakytree.farm\Policies\{31B2F340-016D-11D2-945F-00C04FB984F9}\Machine\Registry.pol</td></tr>
            <tr><td><span class="block ml-[-28px]">sysvol</span></td><td>FILE (22/22) R [100.00%]</td><td>22 bytes</td><td>\sneakytree.farm\Policies\{31B2F340-016D-11D2-945F-00C04FB984F9}\gpt.ini</td></tr>
            <tr><td><span class="block ml-[-28px]">IPC$</span></td><td>FILE (160/160) R&amp;W [100.00%]</td><td>160 bytes</td><td>\samr</td></tr>
            <tr><td><span class="block ml-[-28px]">IPC$</span></td><td>FILE (160/160) R&amp;W [100.00%]</td><td>160 bytes</td><td>\samr</td></tr>
            <tr><td><span class="block ml-[-28px]">IPC$</span></td><td>FILE (160/160) R&amp;W [100.00%]</td><td>160 bytes</td><td>\samr</td></tr>
            <tr><td><span class="block ml-[-28px]">IPC$</span></td><td>FILE (160/160) R&amp;W [100.00%]</td><td>160 bytes</td><td>\samr</td></tr>
          </tbody>
        </table>
      </div>
      <div class="h-[21px] shrink-0 flex bg-[#484848] border-t border-t-[#1c1c1c]">
        <div class="w-[20px] border border-[#5a5a5a] flex items-center justify-center"><svg class="w-[6px] h-[11px]" viewBox="0 0 6 11"><path d="M6 0L0 5.500L6 11Z" fill="#c8c8c8"/></svg></div>
        <div class="w-[338px]"></div>
        <div class="w-[1110px] bg-[#4e4e4e] border border-[#5e5e5e]"></div>
        <div class="flex-1 border border-[#5a5a5a] flex items-center justify-center"><svg class="w-[6px] h-[11px]" viewBox="0 0 6 11"><path d="M0 0L6 5.500L0 11Z" fill="#c8c8c8"/></svg></div>
      </div>
    </div>
    <div class="mt-[12px] mr-[17px] flex justify-end items-center gap-[11px] [&>div]:w-[118px] [&>div]:h-[34px] [&>div]:rounded-[3px] [&>div]:flex [&>div]:items-center [&>div]:justify-center [&>div]:bg-[#454545] [&>div]:border [&>div]:border-[#2a2a2a]">
      <div>保存</div>
      <div>全部保存</div>
      <div class="text-[#7a7a7a]">Preview</div>
      <div class="!bg-[#4a4f56] !border-[#3b97e8]">关闭</div>
      <div>帮助</div>
    </div>
    <!-- size grip -->
    <svg class="absolute right-[1px] bottom-[1px] w-[16px] h-[16px]" viewBox="0 0 16 16"><g fill="#6a6a6a"><rect x="12" y="0" width="3" height="3"/><rect x="8" y="4" width="3" height="3"/><rect x="12" y="4" width="3" height="3"/><rect x="4" y="8" width="3" height="3"/><rect x="8" y="8" width="3" height="3"/><rect x="12" y="8" width="3" height="3"/><rect x="0" y="12" width="3" height="3"/><rect x="4" y="12" width="3" height="3"/><rect x="8" y="12" width="3" height="3"/></g></svg>
  </div>

  <!-- watermark -->
  <div class="absolute left-[1977px] top-[1392px] w-[560px] h-[112px] flex items-center pointer-events-none text-white/25">
    <svg class="w-[106px] h-[112px]" viewBox="0 0 106 112"><path d="M0 16H61L0 111Z" fill="currentColor"/><path d="M106 0V103H40Z" fill="currentColor"/></svg>
    <span class="ml-[28px] text-[104px] leading-none tracking-[1px] font-medium [font-family:'Noto_Sans_CJK_SC',sans-serif]">先知社区</span>
  </div>
</div>
</body>
</html>
